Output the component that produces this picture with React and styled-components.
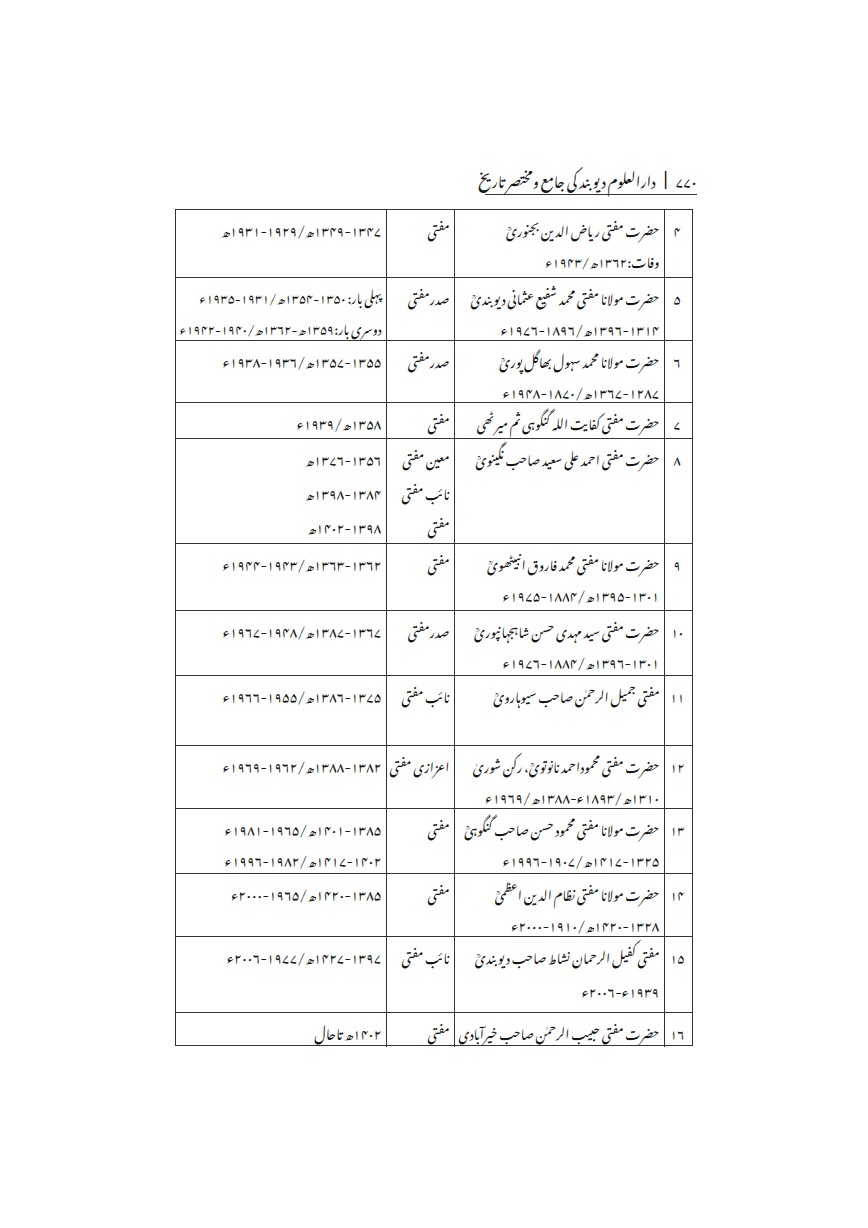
import React from "react";
import styled, { createGlobalStyle } from "styled-components";

const GlobalStyle = createGlobalStyle`
    html, body {
        margin: 0;
        padding: 0;
        background: #ffffff;
    }
    body {
        font-family: "Noto Nastaliq Urdu", "Noto Naskh Arabic", "Noto Sans Arabic", "DejaVu Sans", sans-serif;
        color: #161616;
    }
`;

const Page = styled.div`
    width: 868px;
    height: 1228px;
    box-sizing: border-box;
    padding: 163px 171px 0 175px;
`;

const Header = styled.header`
    direction: rtl;
    display: flex;
    align-items: center;
    gap: 7px;
    margin-left: 310px;
    height: 31px;
    border-bottom: 1.5px solid #333333;
    font-size: 14.5px;
    white-space: nowrap;
`;

const PageNum = styled.span`
    font-size: 14px;
`;

const Bar = styled.span`
    font-family: "DejaVu Sans", sans-serif;
    font-size: 17px;
`;

const Table = styled.div`
    direction: rtl;
    box-sizing: border-box;
    width: 518px;
    margin-top: 14px;
    border: 1.5px solid #333333;
    font-size: 13px;
`;

const Row = styled.div`
    display: grid;
    grid-template-columns: 28.5px 210px 68px 1fr;
    box-sizing: border-box;
    height: ${({ $h }) => `${$h}px`};
    border-bottom: 1.5px solid #333333;

    &:last-child {
        border-bottom: none;
    }
`;

const Cell = styled.div`
    padding: 3px 4px 0 2px;
    border-left: 1.5px solid #333333;
    text-align: ${({ $center }) => ($center ? "center" : "right")};
    font-size: ${({ $size }) => ($size ? `${$size}px` : "inherit")};
    white-space: nowrap;

    &:last-child {
        border-left: none;
    }
`;

const Stack = styled.div`
    display: flex;
    flex-direction: column;
    gap: ${({ $spread }) => ($spread ? "3px" : "0")};
`;

const Line = styled.div`
    height: 31px;
    line-height: 31px;
    font-size: ${({ $digits }) => ($digits ? "13.5px" : "inherit")};
`;

const ALM = "\u061C";

const rows = [
    { n: "۴", h: 68, name: ["حضرت مفتی ریاض الدین بجنوریؒ", "وفات:۱۳۶۲ھ/۱۹۴۳ء"], title: ["مفتی"], dates: ["۱۳۴۷-۱۳۴۹ھ/۱۹۲۹-۱۹۳۱ھ"] },
    { n: "۵", h: 63, name: ["حضرت مولانا مفتی محمد شفیع عثمانی دیوبندیؒ", "۱۳۱۴-۱۳۹۶ھ/۱۸۹۶-۱۹۷۶ء"], title: ["صدرمفتی"], dates: ["پہلی بار: ۱۳۵۰-۱۳۵۴ھ/۱۹۳۱-۱۹۳۵ء", "دوسری بار:۱۳۵۹ھ-۱۳۶۲ھ/۱۹۴۰-۱۹۴۲ء"], dateSize: 12.6 },
    { n: "۶", h: 62, name: ["حضرت مولانا محمد سہول بھاگل پوریؒ", "۱۲۸۷-۱۳۶۷ھ/۱۸۷۰-۱۹۴۸ء"], title: ["صدرمفتی"], dates: ["۱۳۵۵-۱۳۵۷ھ/۱۹۳۶-۱۹۳۸ء"] },
    { n: "۷", h: 36, name: ["حضرت مفتی کفایت اللہ گنگوہی ثم میرٹھی"], title: ["مفتی"], dates: ["۱۳۵۸ھ/۱۹۳۹ء"] },
    { n: "۸", h: 105, name: ["حضرت مفتی احمد علی سعید صاحب نگینویؒ"], title: ["معین مفتی", "نائب مفتی", "مفتی"], dates: ["۱۳۵۶-۱۳۷۶ھ", "۱۳۸۴-۱۳۹۸ھ", "۱۳۹۸-۱۴۰۲ھ"], spread: true },
    { n: "۹", h: 67, name: ["حضرت مولانا مفتی محمد فاروق انبیٹھویؒ", "۱۳۰۱-۱۳۹۵ھ/۱۸۸۴-۱۹۷۵ء"], title: ["مفتی"], dates: ["۱۳۶۲-۱۳۶۳ھ/۱۹۴۳-۱۹۴۴ء"] },
    { n: "۱۰", h: 65, name: ["حضرت مفتی سید مہدی حسن شاہجہانپوریؒ", "۱۳۰۱-۱۳۹۶ھ/۱۸۸۴-۱۹۷۶ء"], title: ["صدرمفتی"], dates: ["۱۳۶۷-۱۳۸۷ھ/۱۹۴۸-۱۹۶۷ء"] },
    { n: "۱۱", h: 70, name: ["مفتی جمیل الرحمٰن صاحب سیوہارویؒ"], title: ["نائب مفتی"], dates: ["۱۳۷۵-۱۳۸۶ھ/۱۹۵۵-۱۹۶۶ء"] },
    { n: "۱۲", h: 63, name: ["حضرت مفتی محموداحمد نانوتویؒ، رکن شوریٰ", "۱۳۱۰ھ/۱۸۹۳ء-۱۳۸۸ھ/۱۹۶۹ء"], title: ["اعزازی مفتی"], dates: ["۱۳۸۲-۱۳۸۸ھ/۱۹۶۲-۱۹۶۹ء"] },
    { n: "۱۳", h: 65, name: ["حضرت مولانا مفتی محمود حسن صاحب گنگوہیؒ", "۱۳۲۵-۱۴۱۷ھ/۱۹۰۷-۱۹۹۶ء"], title: ["مفتی"], dates: ["۱۳۸۵-۱۴۰۱ھ/۱۹۶۵-۱۹۸۱ء", "۱۴۰۲-۱۴۱۷ھ/۱۹۸۲-۱۹۹۶ء"] },
    { n: "۱۴", h: 63, name: ["حضرت مولانا مفتی نظام الدین اعظمیؒ", "۱۳۲۸-۱۴۲۰ھ/۱۹۱۰-۲۰۰۰ء"], title: ["مفتی"], dates: ["۱۳۸۵-۱۴۲۰ھ/۱۹۶۵-۲۰۰۰ء"] },
    { n: "۱۵", h: 76, name: ["مفتی کفیل الرحمان نشاط صاحب دیوبندیؒ", "۱۹۳۹ء-۲۰۰۶ء"], title: ["نائب مفتی"], dates: ["۱۳۹۷-۱۴۲۷ھ/۱۹۷۷-۲۰۰۶ء"], spread: true },
    { n: "۱۶", h: 32, name: ["حضرت مفتی حبیب الرحمٰن صاحب خیرآبادی"], title: ["مفتی"], dates: ["۱۴۰۲ھ تاحال"] },
];

const startsWithDigit = (text) => /^[۰-۹]/.test(text);

function lines(list, digitSize = true) {
    return list.map((text, i) => (
        <Line key={i} $digits={digitSize && startsWithDigit(text)}>
            {ALM + text}
        </Line>
    ));
}

export default function App() {
    return (
        <Page>
            <GlobalStyle />
            <Header>
                <PageNum>۷۷۰</PageNum>
                <Bar>|</Bar>
                <span>دارالعلوم دیوبند کی جامع ومختصر تاریخ</span>
            </Header>
            <Table>
                {rows.map((row) => (
                    <Row key={row.n} $h={row.h}>
                        <Cell $center>{lines([row.n], false)}</Cell>
                        <Cell>
                            <Stack $spread={row.spread}>{lines(row.name)}</Stack>
                        </Cell>
                        <Cell>
                            <Stack $spread={row.spread}>{lines(row.title)}</Stack>
                        </Cell>
                        <Cell $size={row.dateSize}>
                            <Stack $spread={row.spread}>{lines(row.dates)}</Stack>
                        </Cell>
                    </Row>
                ))}
            </Table>
        </Page>
    );
}
